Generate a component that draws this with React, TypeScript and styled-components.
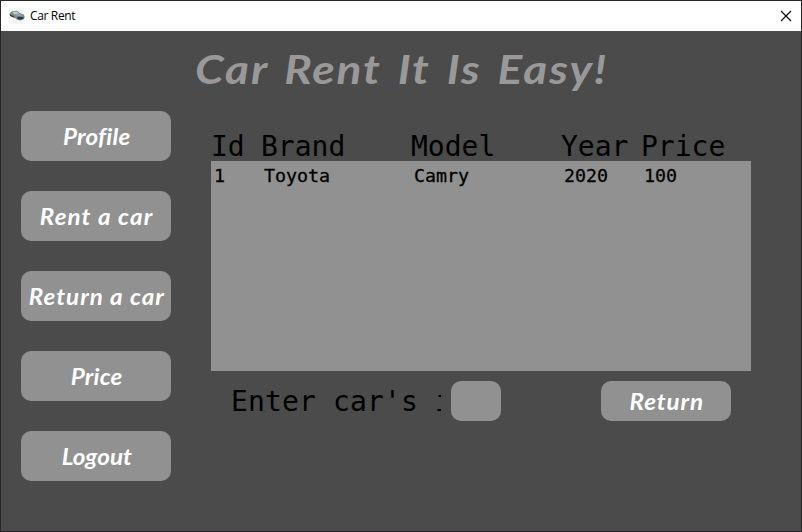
import React from "react";
import styled, { createGlobalStyle } from "styled-components";

const Global = createGlobalStyle`
  * { box-sizing: border-box; }
  body { margin: 0; background: #4b4b4b; overflow: hidden; }
`;

const Window = styled.div`
  width: 802px;
  height: 532px;
  border: 1px solid #29272a;
  background: #4b4b4b;
  display: flex;
  flex-direction: column;
  overflow: hidden;
`;

const TitleBar = styled.header`
  height: 30px;
  flex: none;
  background: #fff;
  display: flex;
  align-items: center;
  padding: 0 9px 0 8px;
`;

const WindowTitle = styled.span`
  flex: 1;
  margin-left: 5px;
  font: 12px/16px "Open Sans", "Noto Sans", sans-serif;
  letter-spacing: -0.35px;
  color: #000;
`;

const CloseButton = styled.button`
  width: 12px;
  height: 12px;
  padding: 0;
  border: 0;
  background: none;
  display: flex;
`;

const Banner = styled.h1`
  margin: 0;
  height: 80px;
  padding: 10px 0 0 194px;
  font: italic 700 40px/56px "Lato", sans-serif;
  letter-spacing: 1.7px;
  word-spacing: 3.3px;
  white-space: pre;
  color: #999;
`;

const BannerText = styled.span`
  display: inline-block;
  transform: scaleX(1.15);
  transform-origin: left center;
`;

const Body = styled.main`
  display: flex;
  padding-left: 20px;
`;

const Menu = styled.nav`
  width: 150px;
  display: flex;
  flex-direction: column;
  gap: 30px;
`;

const Button = styled.button<{ $w: number; $h: number; $track: number }>`
  width: ${(p) => p.$w}px;
  height: ${(p) => p.$h}px;
  padding: 2px 0 0 1px;
  border: 0;
  border-radius: 10px;
  background: #919191;
  color: #fff;
  font: italic 700 22px/28px "Lato", sans-serif;
  letter-spacing: ${(p) => p.$track}px;
  white-space: nowrap;
`;

const ButtonText = styled.span`
  display: inline-block;
  transform: scaleX(1.1);
`;

const Content = styled.section`
  width: 540px;
  margin: 20px 0 0 40px;
`;

const HeadRow = styled.div`
  height: 30px;
  display: grid;
  grid-template-columns: 50px 150px 150px 80px 110px;
  font: 28px/32px "DejaVu Sans Mono", monospace;
  color: #000;
`;

const Table = styled.div`
  height: 210px;
  background: #919191;
`;

const DataRow = styled.div`
  height: 30px;
  padding-left: 3px;
  display: grid;
  grid-template-columns: 50px 150px 150px 80px 107px;
  font: 18.3px/30px "DejaVu Sans Mono", monospace;
  -webkit-text-stroke: 0.3px #000;
  color: #000;
`;

const Form = styled.div`
  height: 40px;
  margin: 10px 0 0 20px;
  display: flex;
`;

const Label = styled.label`
  width: 210px;
  overflow: hidden;
  white-space: nowrap;
  font: 28px/42px "DejaVu Sans Mono", monospace;
  letter-spacing: 0.15px;
  color: #000;
`;

const IdInput = styled.input`
  width: 50px;
  height: 40px;
  margin: 0 100px 0 10px;
  border: 0;
  border-radius: 10px;
  background: #919191;
  outline: 0;
`;

const CarIcon = () => (
  <svg width="16" height="16" viewBox="0 0 16 16">
    <rect width="16" height="16" fill="#f4f5f5" />
    <path d="M.5 5.5 3 3.2l5-.4 3.2 2.4 3.6 1.4.9 2.7-1.2 2-3.3 1.2-3.4-1L5 9.1 1 7.7Z" fill="#7c878c" />
    <path d="m3.2 4 4.4-.4 2.5 1.8-4.6 1Z" fill="#c4ced1" />
    <path d="m.8 6.2 4.4 2.2.4 1.6L1 7.9ZM9 8.8l5.7.4-.3 1.6-3.5.9-2.7-1Z" fill="#30383c" />
    <path d="m6.2 7 4.2-.8 3.3 1.2-4.3.3Z" fill="#aeb8bc" />
  </svg>
);

const menu = [
  { label: "Profile", track: 0.2 },
  { label: "Rent a car", track: 1 },
  { label: "Return a car", track: 0.9 },
  { label: "Price", track: 0.2 },
  { label: "Logout", track: 0 },
];
const columns = ["Id", "Brand", "Model", "Year", "Price"];
const cars = [["1", "Toyota", "Camry", "2020", "100"]];

export default function App() {
  return (
    <>
      <Global />
      <Window>
        <TitleBar>
          <CarIcon />
          <WindowTitle>Car Rent</WindowTitle>
          <CloseButton aria-label="Close">
            <svg width="12" height="12" viewBox="0 0 12 12">
              <path d="m1 1 10 10M11 1 1 11" stroke="#000" strokeWidth="1.1" />
            </svg>
          </CloseButton>
        </TitleBar>
        <Banner><BannerText>Car Rent It Is Easy!</BannerText></Banner>
        <Body>
          <Menu>
            {menu.map((m) => (
              <Button key={m.label} $w={150} $h={50} $track={m.track}>
                <ButtonText>{m.label}</ButtonText>
              </Button>
            ))}
          </Menu>
          <Content>
            <HeadRow>{columns.map((c) => <span key={c}>{c}</span>)}</HeadRow>
            <Table>
              {cars.map((car) => (
                <DataRow key={car[0]}>{car.map((v, i) => <span key={i}>{v}</span>)}</DataRow>
              ))}
            </Table>
            <Form>
              <Label htmlFor="car-id">Enter car's id:</Label>
              <IdInput id="car-id" />
              <Button $w={130} $h={40} $track={0.8}>
                <ButtonText>Return</ButtonText>
              </Button>
            </Form>
          </Content>
        </Body>
      </Window>
    </>
  );
}
